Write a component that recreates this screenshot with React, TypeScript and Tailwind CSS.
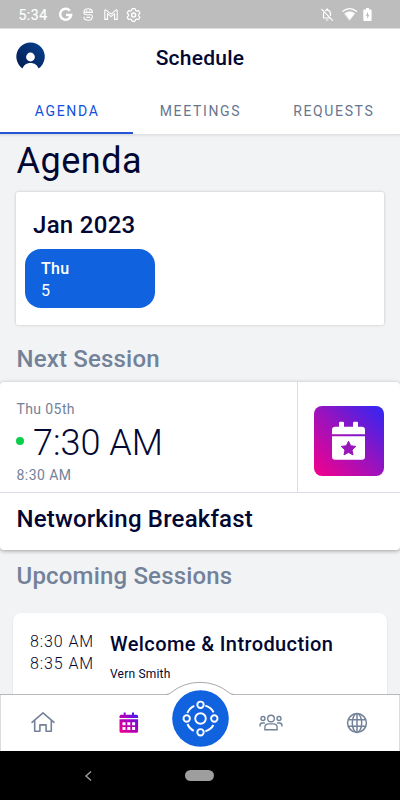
import type { ReactNode } from "react"

const tabs = ["AGENDA", "MEETINGS", "REQUESTS"]

function StatusBar() {
  return (
    <div className="h-[29px] shrink-0 bg-[#bdbdbd] border-b border-[#dedede] text-white">
      <svg width="400" height="28" viewBox="0 0 400 28" fill="none" stroke="white" strokeLinecap="round" strokeLinejoin="round">
        <text x="18.5" y="19.6" fontSize="14" fontWeight="400" fill="white" stroke="white" strokeWidth=".2" textLength="28.5">
          5:34
        </text>
        {/* Google */}
        <path d="M69.8 10.7a5.5 5.5 0 1 0 1.3 4.3H66" strokeWidth="2.5" strokeLinecap="butt" strokeLinejoin="miter" />
        {/* face */}
        <path d="M84 13.300v-1.300c0-2 1.800-3.200 4.200-3.200s4.200 1.200 4.200 3.200v.4M84 12.400h8.400M86.700 10.500v.6M89.800 10.500v.6M84 13.300c0 1 .6 1.300 1.800 1.400h5c1.200.1 1.600.6 1.600 1.600 0 2.700-1.700 4-4.200 4s-4.200-1.300-4.200-3.300M86.800 17.400h3" strokeWidth="1.1" />
        {/* Gmail */}
        <path d="M104.800 19.400V10.200l1-.3 5.200 4.300 5.200-4.300 1 .3v9.200h-2.700v-5.700l-3.500 2.900-3.500-2.900v5.700z" strokeWidth="1.1" />
        {/* settings */}
        <path d="m132 9 .4-.4h2.4l.4.4.4 1.500 1.100.6 1.500-.5.7.4 1 1.800-.2.6-1.100 1.100v1.300l1.100 1.100.1.600-1 1.600-.7.300-1.500-.4-1.100.6-.4 1.400-.5.300h-2.100l-.5-.3-.4-1.400-1.100-.6-1.500.4-.7-.3-1-1.600.1-.6 1.100-1.100v-1.300l-1.100-1.100-.1-.6 1-1.800.7-.4 1.500.5 1.100-.6z" strokeWidth="1.200" />
        <circle cx="133.6" cy="14.9" r="2" strokeWidth="1.5" />
        {/* muted bell */}
        <path d="m321.800 9.300 10.700 11M324 12.200c-.4.7-.5 1.300-.5 2V18h7M325.400 10.600c.4-.3.900-.5 1.400-.5V9h.8v1.100c2 .4 2.900 2 2.900 4v1.300M326.200 20h1.600" strokeWidth="1.200" />
        {/* wifi */}
        <path d="M343 11.300c4-3.600 9.400-3.600 13.400 0" strokeWidth="1.400" />
        <path d="M344.700 13.600c3-2.500 7-2.500 10 0l-5 6.400z" fill="white" strokeWidth=".5" />
        {/* battery */}
        <path d="M366 8h3v1.400h1.500c.8 0 1.100.3 1.100 1v9.400c0 .8-.3 1.200-1.100 1.200h-6c-.8 0-1.200-.4-1.200-1.200v-9.400c0-.7.4-1 1.200-1H366z" fill="white" stroke="none" />
        <path d="m368 11.800-2.300 4h1.500v3l2.200-4h-1.400z" fill="#bdbdbd" stroke="none" />
      </svg>
    </div>
  )
}

function Header() {
  return (
    <header className="h-[58px] shrink-0 grid grid-cols-[1fr_auto_1fr] items-center px-4">
      <svg className="-mt-[2px]" width="30" height="30" viewBox="0 0 30 30">
        <defs>
          <linearGradient id="avatar" x1="0" y1="1" x2="1" y2="0">
            <stop offset="0" stopColor="#041c50" />
            <stop offset="1" stopColor="#064190" />
          </linearGradient>
        </defs>
        <path d="M6.600 26.500A14.200 14.200 0 1 1 22.500 26.500C21.400 23.100 18.500 21 14.500 21S7.700 23.100 6.600 26.500Z" fill="url(#avatar)" />
        <circle cx="14.500" cy="15" r="4.400" fill="white" />
      </svg>
      <h1 className="text-[21px] font-medium leading-6 tracking-[0.250px]">Schedule</h1>
    </header>
  )
}

function Tabs() {
  return (
    <nav className="relative z-10 h-[48px] shrink-0 grid grid-cols-3 bg-white border-b border-[#dddfe2] shadow-[0_1px_2px_rgba(0,0,0,0.08)]">
      {tabs.map((tab, i) => (
        <div
          key={tab}
          className={
            i === 0
              ? "flex justify-center pt-[14px] pl-px text-sm leading-5 tracking-[1.650px] text-[#1250dc] border-b-2 border-[#2455d6]"
              : "flex justify-center pt-[14px] pl-px text-sm leading-5 tracking-[1.650px] text-[#66768f]"
          }
        >
          {tab}
        </div>
      ))}
    </nav>
  )
}

function SectionTitle({ children }: { children: ReactNode }) {
  return <h2 className="pl-[16.500px] text-2xl leading-8 font-medium tracking-[0.180px] text-[#738299]">{children}</h2>
}

function CalendarStar() {
  return (
    <div className="size-[70px] rounded-lg bg-[linear-gradient(45deg,#f5008b_0%,#9b12bd_50%,#2d27f5_100%)]">
      <svg width="70" height="70" viewBox="0 0 70 70">
        <path d="M18 28.200V24a3.200 3.200 0 0 1 3.200-3.200H25V17a1.200 1.200 0 0 1 1.200-1.200h2.600A1.200 1.200 0 0 1 30 17v3.800h9V17a1.200 1.200 0 0 1 1.200-1.200h2.600A1.200 1.200 0 0 1 44 17v3.800h3.800A3.200 3.200 0 0 1 51 24v4.200zM18 30.200h33v20.600a3 3 0 0 1-3 3H21a3 3 0 0 1-3-3z" fill="white" />
        <path d="m34.500 35.200 2.200 4.600 5.100.6-3.800 3.500 1 5-4.500-2.500-4.500 2.500 1-5-3.800-3.500 5.100-.6z" fill="#9816b8" stroke="#9816b8" strokeWidth="1" strokeLinejoin="round" />
      </svg>
    </div>
  )
}

function NextSession() {
  return (
    <section className="mt-[7px] h-[168px] rounded-[4px] bg-white shadow-[0_1px_4px_rgba(0,0,0,0.35)]">
      <div className="flex h-[111px] border-b border-[#d9dde5]">
        <div className="w-[298px] border-r border-[#d9dde5] pl-4 pt-[17px]">
          <div className="pl-[0.500px] text-sm leading-5 text-[#738299] tracking-[0.400px]">Thu 05th</div>
          <div className="flex items-center h-12">
            <span className="size-2 rounded-full bg-[#0bcf4b] mr-[9px] -mt-1" />
            <span className="text-[36px] leading-10 font-light">7:30 AM</span>
          </div>
          <div className="pl-[0.500px] text-sm leading-4 text-[#738299] tracking-[0.450px]">8:30 AM</div>
        </div>
        <div className="flex-1 flex items-center pl-4 pt-2">
          <CalendarStar />
        </div>
      </div>
      <h3 className="pl-[16.500px] pt-[10px] text-2xl leading-8 font-medium tracking-[0.180px]">Networking Breakfast</h3>
    </section>
  )
}

function UpcomingCard() {
  return (
    <section className="mt-[21px] ml-[13px] mr-[13px] h-[100px] rounded-lg bg-white flex shadow-[0_1px_2px_rgba(0,0,0,0.12)]">
      <div className="w-[97px] pl-[17px] pt-[18px] text-base leading-[22px] font-light tracking-[0.900px]">
        <div>8:30 AM</div>
        <div>8:35 AM</div>
      </div>
      <div className="pt-[18px]">
        <div className="text-xl leading-[26px] font-medium tracking-[0.400px]">Welcome &amp; Introduction</div>
        <div className="mt-[9px] text-xs leading-4 tracking-[0.200px]">Vern Smith</div>
      </div>
    </section>
  )
}

function HubIcon() {
  return (
    <svg width="57" height="57" viewBox="0 0 57 57" fill="none" stroke="white" strokeWidth="1.900">
      <circle cx="28.500" cy="28.500" r="28.300" fill="#1162df" stroke="none" />
      <circle cx="28.500" cy="28.500" r="5.300" />
      <circle cx="28.500" cy="14.800" r="3.200" />
      <circle cx="28.500" cy="42.300" r="3.200" />
      <circle cx="14.700" cy="28.500" r="3.200" />
      <circle cx="42.300" cy="28.500" r="3.200" />
      <path d="M15.400 23c1.300-3.200 3.700-5.700 6.900-7.100M15.400 34c1.300 3 3.600 5.500 6.400 6.900M33.300 15.700c3.700 1.200 6.700 3.300 8.300 6.600M33.300 41.300c3.700-1.200 6.600-3.300 8.100-6.300" />
    </svg>
  )
}

function BottomNav() {
  return (
    <nav className="relative z-10 h-[57px] shrink-0 bg-white border-t border-[#b9b9b9] flex text-[#738299] shadow-[inset_1px_0_#dcdcdc,inset_-1px_0_#dcdcdc]">
      {/* raised notch behind the hub button */}
      <svg className="absolute -top-[14px] left-[160px]" width="80" height="18" viewBox="0 0 80 18">
        <path d="M6 15.500Q8.500 13.600 10.500 12A46 46 0 0 1 69.500 12Q71.500 13.600 74 15.500V18H6Z" fill="white" />
        <path d="M6 13.500Q8.500 13.500 10.500 12A46 46 0 0 1 69.500 12Q71.500 13.500 74 13.500" fill="none" stroke="#a9a9a9" />
      </svg>
      <div className="w-[85.500px] flex justify-center pt-[15px]">
        <svg width="26" height="24" viewBox="0 0 26 24" fill="none" stroke="currentColor" strokeWidth="1.600" strokeLinejoin="round" strokeLinecap="round">
          <path d="m2 12.300 11-9.500 11 9.500M4.700 10.500v10.700h5.200v-6.300h6.200v6.300h5.200V10.500" />
        </svg>
      </div>
      <div className="w-[85.500px] flex justify-center pt-[17px] pl-px">
        <svg width="20" height="22" viewBox="0 0 20 22">
          <defs>
            <linearGradient id="cal" x1="0" y1="1" x2="1" y2="0">
              <stop offset="0" stopColor="#f0008c" />
              <stop offset=".55" stopColor="#a600c0" />
              <stop offset="1" stopColor="#2428ff" />
            </linearGradient>
          </defs>
          <path fillRule="evenodd" fill="url(#cal)" d="M.5 6V4.200q0-1.500 1.500-1.500h2.700V.5h2v2.200h6.300V.5h2v2.200h2.600q1.500 0 1.500 1.500V6zM.5 7.300h18.600v11.900q0 1.500-1.500 1.500H2q-1.500 0-1.500-1.500zM3.500 10.200v3h3v-3zM8.300 10.200v3h3v-3zM13.100 10.200v3h3v-3zM3.500 15.100v3h3v-3zM8.300 15.100v3h3v-3zM13.100 15.100v3h3v-3z" />
        </svg>
      </div>
      <div className="relative w-[58px] flex justify-center">
        <div className="absolute -top-[5px] left-[0.500px]">
          <HubIcon />
        </div>
      </div>
      <div className="w-[85.500px] flex justify-center pt-[18px]">
        <svg className="-ml-px" width="24" height="20" viewBox="0 0 24 20" fill="none" stroke="currentColor" strokeWidth="1.400" strokeLinecap="round">
          <circle cx="12" cy="5.500" r="3.300" />
          <circle cx="4" cy="5.500" r="2" />
          <circle cx="20" cy="5.500" r="2" />
          <path d="M5.900 16.700v-2.300c0-2.200 1.600-3.500 3.800-3.500h4.600c2.200 0 3.800 1.300 3.800 3.500v2.300zM1 13v-.5c0-1.500 1-2.500 2.500-2.500h2M23 13v-.5c0-1.500-1-2.500-2.500-2.500h-2" />
        </svg>
      </div>
      <div className="w-[85.500px] flex justify-center pt-[17px]">
        <svg width="22" height="22" viewBox="0 0 22 22" fill="none" stroke="currentColor" strokeWidth="1.500">
          <circle cx="11" cy="11" r="9.400" />
          <ellipse cx="11" cy="11" rx="4.700" ry="9.400" />
          <path d="M2.500 7.700h17M2.500 14.300h17M11 1.600v18.800" />
        </svg>
      </div>
    </nav>
  )
}

function SystemNav() {
  return (
    <div className="h-[49px] shrink-0 bg-black grid grid-cols-3 items-center">
      <svg className="ml-[83px]" width="10" height="12" viewBox="0 0 10 12" fill="none" stroke="#9a9a9a" strokeWidth="1.500">
        <path d="M8 1.500 3 6l5 4.500" />
      </svg>
      <div className="w-[29px] h-[11px] rounded-full bg-[#9e9e9e] justify-self-center" />
    </div>
  )
}

export default function App() {
  return (
    <div className="w-[400px] h-[800px] flex flex-col overflow-hidden bg-white font-['Roboto',sans-serif] text-[#020733] whitespace-nowrap">
      <StatusBar />
      <Header />
      <Tabs />
      <main className="h-[559px] shrink-0 overflow-hidden bg-[#f1f3f5]">
        <h2 className="pl-[16.500px] pt-[6px] text-[36px] leading-10 tracking-[0.500px]">Agenda</h2>
        <section className="mt-[11px] mx-4 h-[133px] rounded-[2px] bg-white shadow-[0_0_3px_rgba(0,0,0,0.22)]">
          <h3 className="pl-[17px] pt-[17px] text-2xl leading-8 font-medium tracking-[0.300px]">Jan 2023</h3>
          <div className="mt-[7.500px] ml-[8.500px] w-[130px] h-[59.500px] rounded-2xl bg-[#1162df] pl-[16.500px] pt-[9px] text-white text-base leading-[22px]">
            <div className="font-medium tracking-[0.300px]">Thu</div>
            <div>5</div>
          </div>
        </section>
        <div className="pt-[18px]">
          <SectionTitle>Next Session</SectionTitle>
        </div>
        <NextSession />
        <div className="pt-[10px]">
          <SectionTitle>Upcoming Sessions</SectionTitle>
        </div>
        <UpcomingCard />
      </main>
      <BottomNav />
      <SystemNav />
    </div>
  )
}
